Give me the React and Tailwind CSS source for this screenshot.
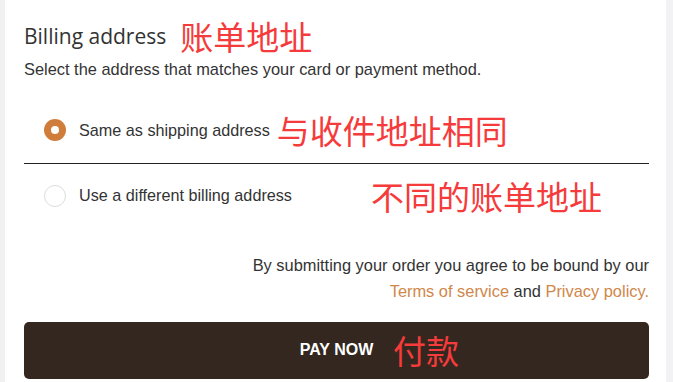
export default function App() {
  const cn = { fontFamily: '"Noto Sans CJK SC", sans-serif' }
  return (
    <div className="flex h-[382px] w-[673px] overflow-hidden bg-white" style={{ fontFamily: '"Liberation Sans", Arial, sans-serif' }}>
      <div className="w-[5px] bg-[#f0f1f0]" />
      <div className="flex-1 pl-[19px] pr-[17px] pt-[20px]">
        <div className="flex items-center gap-[14px]">
          <h2 className="text-[21px] text-[#333]" style={{ fontFamily: '"Open Sans", sans-serif' }}>Billing address</h2>
          <span className="text-[33px] leading-none text-[#f53b3b]" style={cn}>账单地址</span>
        </div>
        <p className="mt-[4px] text-[16.4px] text-[#333]">Select the address that matches your card or payment method.</p>

        <div className="mt-[16px]">
          <label className="relative flex h-[66px] items-center border-b border-[#222] pl-[20px]">
            <span className="flex h-[22px] w-[22px] items-center justify-center rounded-full bg-[#d07d3c]">
              <span className="h-[8px] w-[8px] rounded-full bg-white" />
            </span>
            <span className="ml-[13px] text-[16.2px] text-[#333]">Same as shipping address</span>
            <span className="ml-[7px] text-[33px] leading-none text-[#f53b3b]" style={cn}>与收件地址相同</span>
          </label>
          <label className="relative flex h-[64px] items-center pl-[20px]">
            <span className="h-[22px] w-[22px] rounded-full border border-[#ddd] bg-white" />
            <span className="ml-[13px] text-[16.2px] text-[#333]">Use a different billing address</span>
            <span className="absolute left-[347px] top-1/2 -translate-y-1/2 text-[33px] leading-none text-[#f53b3b]" style={cn}>不同的账单地址</span>
          </label>
        </div>

        <div className="mt-[24px] text-right text-[16.4px] leading-[26px] text-[#333]">
          <p>By submitting your order you agree to be bound by our</p>
          <p>
            <a href="#" className="text-[#d0874a]">Terms of service</a> and{" "}
            <a href="#" className="text-[#d0874a]">Privacy policy.</a>
          </p>
        </div>

        <button className="relative mt-[18px] flex h-[57px] w-full items-center justify-center rounded-[5px] bg-[#33271f]">
          <span className="text-[16px] font-bold text-white">PAY NOW</span>
          <span className="absolute left-[369px] top-1/2 -translate-y-1/2 text-[33px] leading-none text-[#f53b3b]" style={cn}>付款</span>
        </button>
      </div>
      <div className="w-[7px] bg-[#f2f2f4]" />
    </div>
  )
}
